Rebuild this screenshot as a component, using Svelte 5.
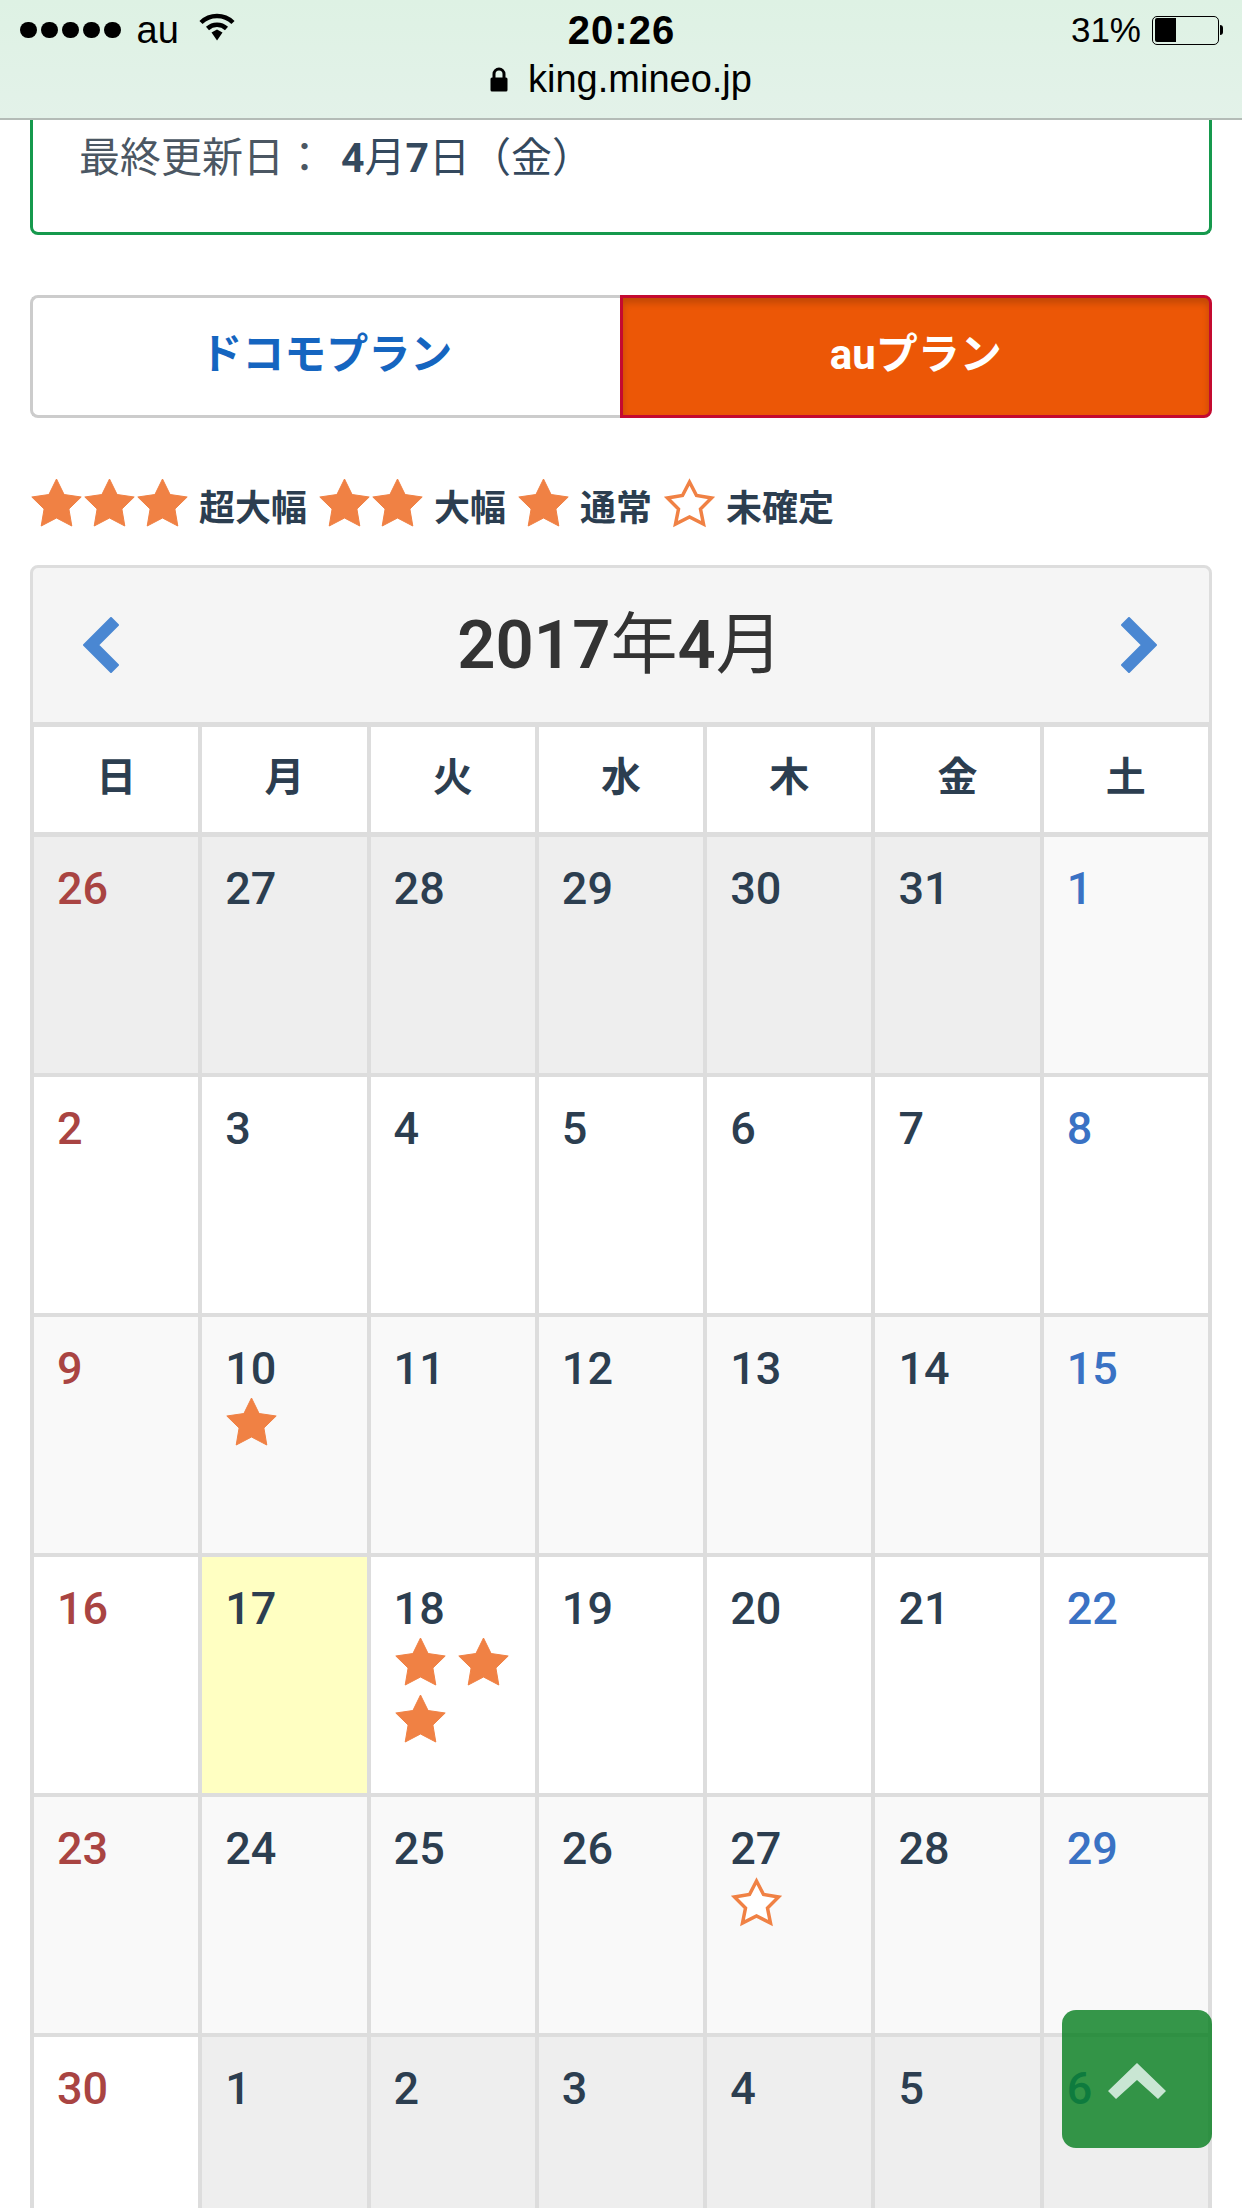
<script>
	const weekdays = ['日', '月', '火', '水', '木', '金', '土'];

	// d: day number, o: other month, s: stars (filled count), e: empty star, t: today
	const rows = [
		[{ d: 26, o: 1 }, { d: 27, o: 1 }, { d: 28, o: 1 }, { d: 29, o: 1 }, { d: 30, o: 1 }, { d: 31, o: 1 }, { d: 1 }],
		[{ d: 2 }, { d: 3 }, { d: 4 }, { d: 5 }, { d: 6 }, { d: 7 }, { d: 8 }],
		[{ d: 9 }, { d: 10, s: 1 }, { d: 11 }, { d: 12 }, { d: 13 }, { d: 14 }, { d: 15 }],
		[{ d: 16 }, { d: 17, t: 1 }, { d: 18, s: 3 }, { d: 19 }, { d: 20 }, { d: 21 }, { d: 22 }],
		[{ d: 23 }, { d: 24 }, { d: 25 }, { d: 26 }, { d: 27, e: 1 }, { d: 28 }, { d: 29 }],
		[{ d: 30 }, { d: 1, o: 1 }, { d: 2, o: 1 }, { d: 3, o: 1 }, { d: 4, o: 1 }, { d: 5, o: 1 }, { d: 6, o: 1 }]
	];

	const legend = [
		{ stars: 3, label: '超大幅' },
		{ stars: 2, label: '大幅' },
		{ stars: 1, label: '通常' },
		{ stars: 0, label: '未確定' }
	];
</script>

{#snippet star(empty)}
	<svg class="star" viewBox="0 0 52 50" aria-hidden="true">
		{#if empty}
			<polygon class="star-empty" points="26,4 33,17.5 48,20 37,31 40,46 26,39 12,46 15,31 4,20 19,17.5" />
		{:else}
			<polygon class="star-full" points="26,1 33.6,16.5 50.7,19 38.4,31 41.3,48 26,40 10.7,48 13.6,31 1.3,19 18.4,16.5" />
		{/if}
	</svg>
{/snippet}

<div class="page">
	<!-- iOS status bar -->
	<header class="status">
		<div class="status-top">
			<div class="status-left">
				<span class="dots"><i></i><i></i><i></i><i></i><i></i></span>
				<span class="carrier">au</span>
				<svg class="wifi" viewBox="0 0 38 28" aria-hidden="true">
					<path d="M3 9.5 A23 23 0 0 1 35 9.5" />
					<path d="M9.5 15.5 A14 14 0 0 1 28.5 15.5" />
					<polygon points="13.5,19.5 19,16.5 24.5,19.5 19,27.5" />
				</svg>
			</div>
			<div class="time">20:26</div>
			<div class="status-right">
				<span class="pct">31%</span>
				<span class="battery"><span class="battery-fill"></span></span>
				<span class="battery-nub"></span>
			</div>
		</div>
		<div class="url">
			<svg class="lock" viewBox="0 0 18 25" aria-hidden="true">
				<path d="M4 11 V7 A5 5 0 0 1 14 7 V11" />
				<rect x="0.5" y="10.5" width="17" height="14" rx="1.5" />
			</svg>
			<span>king.mineo.jp</span>
		</div>
	</header>

	<main>
		<div class="updated">最終更新日：<span class="updated-date"><b>4</b>月<b>7</b>日（金）</span></div>

		<div class="plans">
			<button class="plan">ドコモプラン</button>
			<button class="plan active">auプラン</button>
		</div>

		<div class="legend">
			{#each legend as item}
				<span class="legend-stars">
					{#if item.stars === 0}
						{@render star(true)}
					{:else}
						{#each Array(item.stars) as _}
							{@render star(false)}
						{/each}
					{/if}
				</span>
				<span class="legend-label">{item.label}</span>
			{/each}
		</div>

		<section class="calendar">
			<div class="cal-head">
				<svg class="chev" viewBox="0 0 36 56" aria-hidden="true">
					<polygon points="1,28 28,1 35,8 15,28 35,48 28,55" />
				</svg>
				<h2 class="cal-title"><b>2017</b>年<b>4</b>月</h2>
				<svg class="chev" viewBox="0 0 36 56" aria-hidden="true">
					<polygon points="35,28 8,1 1,8 21,28 1,48 8,55" />
				</svg>
			</div>
			<div class="cal-grid">
				{#each weekdays as w}
					<div class="dow">{w}</div>
				{/each}
				{#each rows as row, r}
					{#each row as c, i}
						<div class="day" class:striped={r % 2 === 0} class:other={c.o} class:today={c.t}>
							<div class="num" class:sun={i === 0} class:sat={i === 6}>{c.d}</div>
							{#if c.s || c.e}
								<div class="day-stars">
									{#if c.e}
										{@render star(true)}
									{:else}
										{#each Array(c.s) as _}
											{@render star(false)}
										{/each}
									{/if}
								</div>
							{/if}
						</div>
					{/each}
				{/each}
			</div>
		</section>
	</main>

	<button class="to-top" aria-label="ページトップへ">
		<svg viewBox="0 0 60 38" aria-hidden="true">
			<polygon points="30,1 59,29 51,37 30,18 9,37 1,29" />
		</svg>
	</button>
</div>

<style>
	:global(body) {
		margin: 0;
		background: #fff;
	}

	.page {
		position: relative;
		width: 1242px;
		height: 2208px;
		overflow: hidden;
		background: #fff;
		font-family: Roboto, "Noto Sans CJK JP", sans-serif;
		color: #2c3e50;
	}

	/* Status bar */
	.status {
		box-sizing: border-box;
		height: 120px;
		background: linear-gradient(#def2e4, #e3f2e9);
		border-bottom: 2px solid #b4bcb7;
		color: #000;
		font-family: "Liberation Sans", sans-serif;
	}
	.status-top {
		display: grid;
		grid-template-columns: 1fr auto 1fr;
		align-items: center;
		height: 60px;
		padding: 0 19px 0 20px;
	}
	.status-left {
		display: flex;
		align-items: center;
	}
	.dots {
		display: flex;
		gap: 4.5px;
	}
	.dots i {
		display: block;
		width: 16.5px;
		height: 16.5px;
		border-radius: 50%;
		background: #000;
	}
	.carrier {
		margin-left: 16px;
		font-size: 38px;
	}
	.wifi {
		width: 38px;
		height: 28px;
		margin: -6px 0 0 19px;
	}
	.wifi path {
		fill: none;
		stroke: #000;
		stroke-width: 4.5;
	}
	.time {
		font-size: 40px;
		font-weight: 700;
		letter-spacing: 1px;
	}
	.status-right {
		display: flex;
		align-items: center;
		justify-content: flex-end;
	}
	.pct {
		margin-right: 11px;
		font-size: 35px;
	}
	.battery {
		box-sizing: border-box;
		width: 67px;
		height: 29px;
		padding: 1.5px;
		border: 1.5px solid #000;
		border-radius: 5px;
	}
	.battery-fill {
		display: block;
		width: 21px;
		height: 100%;
		border-radius: 2px 0 0 2px;
		background: #000;
	}
	.battery-nub {
		width: 3px;
		height: 10px;
		margin-left: 1px;
		border-radius: 0 3px 3px 0;
		background: #000;
	}
	.url {
		display: flex;
		align-items: center;
		justify-content: center;
		gap: 20px;
		height: 38px;
		font-size: 38px;
	}
	.lock {
		width: 18px;
		height: 25px;
	}
	.lock path {
		fill: none;
		stroke: #000;
		stroke-width: 3;
	}

	/* Last updated box */
	.updated {
		box-sizing: border-box;
		height: 115px;
		margin: 0 30px;
		padding: 9px 46px 0;
		border: 3px solid #16994d;
		border-top: 0;
		border-radius: 0 0 8px 8px;
		font-size: 41px;
		line-height: 58px;
		color: #4b5763;
	}
	.updated-date {
		margin-left: 16px;
		color: #34495e;
	}

	/* Plan switch */
	.plans {
		display: flex;
		height: 123px;
		margin: 60px 30px 0;
	}
	.plan {
		flex: 1;
		box-sizing: border-box;
		padding: 0 0 12px;
		border: 3px solid #ccc;
		border-right-width: 0;
		border-radius: 8px 0 0 8px;
		background: #fff;
		color: #1565c0;
		font-family: inherit;
		font-size: 42px;
		font-weight: 700;
	}
	.plan.active {
		border: 3px solid #c40a30;
		border-radius: 0 8px 8px 0;
		background: #ec5706;
		box-shadow: inset 0 5px 7px rgba(0, 0, 0, 0.18);
		color: #fff;
	}

	/* Legend */
	.legend {
		display: flex;
		align-items: center;
		height: 50px;
		margin: 60px 30px 0;
	}
	.legend-stars {
		display: flex;
		margin-right: 10px;
	}
	.legend-label {
		margin: 3px 11px 0 0;
		font-size: 36px;
		font-weight: 700;
		color: #2c3e50;
	}
	.star {
		display: block;
		flex: none;
		width: 53px;
		height: 50px;
	}
	.star-full {
		fill: #f08144;
		stroke: #f08144;
		stroke-width: 1;
		stroke-linejoin: round;
	}
	.star-empty {
		fill: #fff;
		stroke: #f08144;
		stroke-width: 3.5;
	}

	/* Calendar */
	.calendar {
		margin: 37px 30px 0;
	}
	.cal-head {
		box-sizing: border-box;
		display: flex;
		align-items: center;
		justify-content: space-between;
		height: 162px;
		padding: 0 52px 0 50px;
		border: 3px solid #ddd;
		border-bottom-width: 5px;
		border-radius: 8px 8px 0 0;
		background: #f5f5f5;
	}
	.chev {
		width: 36px;
		height: 56px;
	}
	.chev polygon {
		fill: #4a87d2;
		stroke: #4a87d2;
		stroke-width: 2;
		stroke-linejoin: round;
	}
	.cal-title {
		margin: 0 0 13px 0;
		font-size: 67px;
		font-weight: 400;
		color: #333;
	}
	.cal-title b {
		font-weight: 600;
	}
	.cal-grid {
		display: grid;
		grid-template-columns: repeat(7, 1fr);
		border-left: 4px solid #ddd;
	}
	.dow {
		box-sizing: border-box;
		height: 110px;
		padding-top: 26px;
		border-right: 4px solid #ddd;
		border-bottom: 5px solid #ddd;
		text-align: center;
		font-size: 40px;
		line-height: 50px;
		font-weight: 700;
	}
	.day {
		box-sizing: border-box;
		height: 240px;
		padding: 26px 0 0 23px;
		border-right: 4px solid #ddd;
		border-bottom: 4px solid #ddd;
	}
	.day.striped {
		background: #f9f9f9;
	}
	.day.other {
		background: #eee;
	}
	.day.today {
		background: #ffffc2;
	}
	.num {
		font-size: 45px;
		line-height: 52px;
		font-weight: 500;
		color: #2c3e50;
	}
	.num.sun {
		color: #a94442;
	}
	.num.sat {
		color: #3a72c4;
	}
	.day-stars {
		display: flex;
		flex-wrap: wrap;
		gap: 7px 10px;
		margin-top: 2px;
	}

	/* Back to top */
	.to-top {
		position: absolute;
		right: 30px;
		top: 2010px;
		display: flex;
		align-items: center;
		justify-content: center;
		width: 150px;
		height: 138px;
		padding: 4px 0 0;
		border: 0;
		border-radius: 14px;
		background: rgba(4, 125, 29, 0.8);
	}
	.to-top svg {
		width: 60px;
		height: 38px;
	}
	.to-top polygon {
		fill: #c9e6d3;
	}
</style>
